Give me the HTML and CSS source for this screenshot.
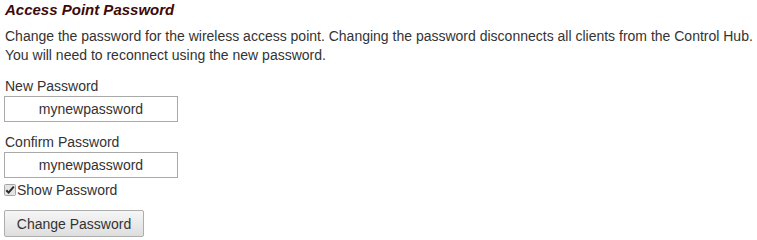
FILE: index.html
```html
<!DOCTYPE html>
<html>
<head>
<meta charset="utf-8">
<link rel="stylesheet" href="styles.css">
</head>
<body>
<div class="page">
  <h2 class="title">Access Point Password</h2>
  <p class="desc">Change the password for the wireless access point. Changing the password disconnects all clients from the Control Hub.<br>You will need to reconnect using the new password.</p>
  <div class="field">
    <label class="label" for="pw1">New Password</label>
    <input class="pw" id="pw1" type="text" value="mynewpassword">
  </div>
  <div class="field field2">
    <label class="label" for="pw2">Confirm Password</label>
    <input class="pw" id="pw2" type="text" value="mynewpassword">
  </div>
  <label class="show"><input type="checkbox" class="check" checked><svg class="box" width="12" height="12" viewBox="0 0 12 12"><rect x="0.5" y="0.5" width="11" height="11" rx="1" fill="#e4e4e4" stroke="#a6a6a6"/><path d="M2.3 6.2 L4.6 8.6 L9.8 2.6" fill="none" stroke="#2a2a2a" stroke-width="2"/></svg>Show Password</label>
  <button class="btn" type="button">Change Password</button>
</div>
</body>
</html>
```

FILE: styles.css
```css
html, body {
  margin: 0;
  padding: 0;
  background: #fff;
}
.page {
  padding: 0 4px;
  font-family: Arial, "Liberation Sans", sans-serif;
  font-size: 14px;
  color: #333;
  display: flex;
  flex-direction: column;
  align-items: flex-start;
}
.title {
  margin: 1px 0 0 1px;
  font-size: 15px;
  font-weight: bold;
  font-style: italic;
  color: #3d0a0a;
  line-height: 17px;
}
.desc {
  margin: 9px 0 0 1px;
  line-height: 19px;
}
.field {
  display: flex;
  flex-direction: column;
  align-items: flex-start;
  margin-top: 12px;
}
.field2 {
  margin-top: 11px;
}
.label {
  margin-left: 1px;
  line-height: 18px;
}
.pw {
  margin: 1px 0 0 0;
  box-sizing: border-box;
  width: 174px;
  height: 26px;
  border: 1px solid #a9a9a9;
  padding: 0 4px;
  font-family: Arial, "Liberation Sans", sans-serif;
  font-size: 14px;
  color: #333;
  text-align: center;
  background: #fff;
}
.show {
  display: flex;
  align-items: center;
  line-height: 18px;
  margin-top: 3px;
}
.check {
  display: none;
}
.box {
  margin: 0 1px 0 0;
  flex: none;
}
.btn {
  margin-top: 11px;
  box-sizing: border-box;
  width: 140px;
  height: 27px;
  border: 1px solid #adadad;
  border-radius: 2px;
  background: linear-gradient(#f6f6f6, #dedede);
  font-family: Arial, "Liberation Sans", sans-serif;
  font-size: 14px;
  color: #333;
  padding: 0;
}
```
